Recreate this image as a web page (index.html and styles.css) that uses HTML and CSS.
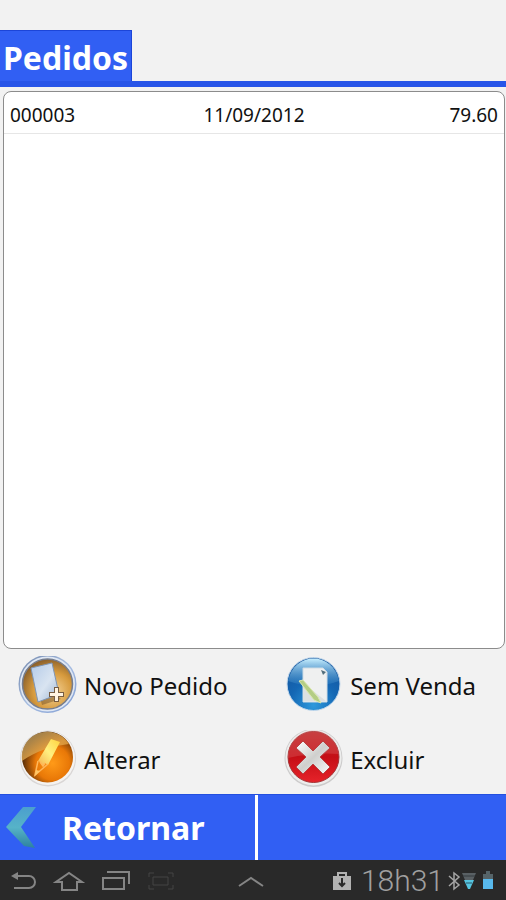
FILE: index.html
```html
<!DOCTYPE html>
<html lang="pt-BR">
<head>
<meta charset="utf-8">
<meta name="viewport" content="width=device-width, initial-scale=1">
<title>Pedidos</title>
<link rel="stylesheet" href="styles.css">
</head>
<body>
<header class="header">
  <h1 class="tab">Pedidos</h1>
</header>

<main class="main">
  <section class="list">
    <table class="orders">
      <tbody>
        <tr><td>000003</td><td class="date">11/09/2012</td><td class="total">79.60</td></tr>
      </tbody>
    </table>
  </section>

  <div class="actions">
    <button class="action" type="button">
      <svg class="action-icon" viewBox="0 0 60 60" aria-hidden="true">
        <defs>
          <radialGradient id="amber" cx=".6" cy=".65" r=".65"><stop offset="0" stop-color="#f6d59a"/><stop offset=".6" stop-color="#d69a3d"/><stop offset="1" stop-color="#8d622c"/></radialGradient>
          <linearGradient id="ring" x1="0" y1="0" x2="1" y2="1"><stop offset="0" stop-color="#6e83a8"/><stop offset=".5" stop-color="#a9bfe2"/><stop offset="1" stop-color="#7d9bd3"/></linearGradient>
          <linearGradient id="sheet" x1="0" y1="0" x2="1" y2="1"><stop offset="0" stop-color="#b3cae8"/><stop offset=".55" stop-color="#d9e4f1"/><stop offset="1" stop-color="#9db4d2"/></linearGradient>
        </defs>
        <circle cx="29.500" cy="28" r="29" fill="url(#ring)"/>
        <circle cx="29.500" cy="28" r="27.500" fill="#dfe7f3"/>
        <circle cx="29.500" cy="28" r="25" fill="url(#amber)" stroke="#777d8c" stroke-width="1.500"/>
        <path d="M16 19L24 49L43 43Z" fill="#765225" opacity=".5"/>
        <path d="M13 12L34 7L41 38L20 46Z" fill="url(#sheet)" stroke="#7e95b5"/>
        <path d="M38.500 31V46M31 38.500H46" stroke="#765c42" stroke-width="5"/>
        <path d="M38.500 32V45M32 38.500H45" stroke="#fff3e1" stroke-width="3"/>
      </svg>
      <span>Novo Pedido</span>
    </button>
    <button class="action" type="button">
      <svg class="action-icon" viewBox="0 0 60 60" aria-hidden="true">
        <defs>
          <radialGradient id="blue" cx=".5" cy=".9" r=".9"><stop offset="0" stop-color="#2e99dc"/><stop offset=".5" stop-color="#1467b4"/><stop offset="1" stop-color="#15539b"/></radialGradient>
          <linearGradient id="shine" x1="0" y1="0" x2="0" y2="1"><stop offset="0" stop-color="#c7efff"/><stop offset="1" stop-color="#4b9bd4" stop-opacity=".2"/></linearGradient>
        </defs>
        <circle cx="29.500" cy="28" r="26.500" fill="url(#blue)" stroke="#c4d9ec"/>
        <path d="M4 25C7 10 18 2.500 29.500 2.500S52 10 55 25Q30 34 4 25Z" fill="url(#shine)"/>
        <path d="M19 12H39L43 16V46H19Z" fill="#eff0f0" stroke="#cfdce5"/>
        <path d="M19 27L42 45H19Z" fill="#dde1e2"/>
        <path d="M37 14L42 16L39 19Z" fill="#536f7d"/>
        <path d="M15 25L19 24L34 41L37 47L30 44Z" fill="#b4cd84" stroke="#dbe8af"/>
      </svg>
      <span>Sem Venda</span>
    </button>
    <button class="action" type="button">
      <svg class="action-icon" viewBox="0 0 60 60" aria-hidden="true">
        <defs>
          <radialGradient id="orange" cx=".6" cy=".62" r=".6"><stop offset="0" stop-color="#ff9a18"/><stop offset=".55" stop-color="#e97807"/><stop offset="1" stop-color="#542b08"/></radialGradient>
          <linearGradient id="gold" x1="0" y1="0" x2="1" y2="1"><stop offset="0" stop-color="#99875e"/><stop offset=".6" stop-color="#e5a445"/><stop offset="1" stop-color="#c48b35"/></linearGradient>
          <linearGradient id="pencil" x1="1" y1="0" x2="0" y2="1"><stop offset="0" stop-color="#ffd23c"/><stop offset=".5" stop-color="#fff080"/><stop offset="1" stop-color="#f5b04d"/></linearGradient>
        </defs>
        <circle cx="30" cy="28.500" r="28" fill="#d9d6d5"/>
        <circle cx="30" cy="28" r="27" fill="#f5f3f1"/>
        <circle cx="29.500" cy="27" r="25.500" fill="url(#orange)"/>
        <path d="M4 31A25.500 25.500 0 0 1 51 14C34 16 18 21 4 31Z" fill="url(#gold)" opacity=".85"/>
        <path d="M33 9L42 12L30 35L27 33L25 36L22 32L20 31Z" fill="url(#pencil)"/>
        <path d="M20 31L17 45L30 34M22 32L25 36L27 33" fill="none" stroke="#ffb75a" stroke-width="1.500"/>
        <path d="M18 40L17 46L22 41Z" fill="#ffc766"/>
      </svg>
      <span>Alterar</span>
    </button>
    <button class="action" type="button">
      <svg class="action-icon" viewBox="0 0 60 60" aria-hidden="true">
        <defs>
          <linearGradient id="red" x1="0" y1="0" x2="0" y2="1"><stop offset="0" stop-color="#bd2b2c"/><stop offset=".5" stop-color="#c50f16"/><stop offset="1" stop-color="#e6232a"/></linearGradient>
          <linearGradient id="cross" x1="0" y1="0" x2="1" y2="1"><stop offset="0" stop-color="#fff"/><stop offset=".5" stop-color="#cfcfcd"/><stop offset="1" stop-color="#fafafa"/></linearGradient>
        </defs>
        <circle cx="29.500" cy="28" r="29" fill="#cccbcb"/>
        <circle cx="29.500" cy="27.500" r="28" fill="#ededec"/>
        <circle cx="29.500" cy="27" r="25.500" fill="url(#red)" stroke="#a33436"/>
        <path d="M4 28A25.500 25.500 0 0 1 55 24Q30 22 4 28Z" fill="#e27170" opacity=".3"/>
        <path d="M19 11L29 21L39 11L46 18L36 27L46 37L39 44L29 34L19 44L12 37L22 27L12 18Z" fill="url(#cross)" stroke="#b84243"/>
      </svg>
      <span>Excluir</span>
    </button>
  </div>
</main>

<footer class="footer">
  <button class="back" type="button">
    <svg class="back-icon" viewBox="0 0 30 42" aria-hidden="true">
      <defs><linearGradient id="teal" x1="0" y1="0" x2="0" y2="1"><stop offset="0" stop-color="#4b9fce"/><stop offset=".5" stop-color="#56b3c8"/><stop offset="1" stop-color="#2d819f"/></linearGradient></defs>
      <path d="M17 0H30L15 20L29 41L18 39L0 20Z" fill="url(#teal)"/>
    </svg>
    <span>Retornar</span>
  </button>
  <div class="footer-rest"></div>
</footer>

<nav class="system">
  <div class="keys">
    <button class="key" type="button" aria-label="Voltar">
      <svg width="30" height="24" viewBox="0 0 30 24"><path d="M8 7H21A6 6 0 0 1 21 19H6" fill="none" stroke="#858585" stroke-width="2"/><path d="M3 7L10 3V11Z" fill="#858585"/></svg>
    </button>
    <button class="key" type="button" aria-label="Início">
      <svg width="34" height="24" viewBox="0 0 34 24"><path d="M9 13H3L16 4L29 13H24M9 12V21H24V12" fill="none" stroke="#858585" stroke-width="2"/></svg>
    </button>
    <button class="key" type="button" aria-label="Recentes">
      <svg width="30" height="24" viewBox="0 0 30 24"><path d="M1 9H22V20H1ZM5 3H27V15" fill="none" stroke="#858585" stroke-width="2"/></svg>
    </button>
    <button class="key" type="button" aria-label="Captura de tela">
      <svg width="28" height="24" viewBox="0 0 28 24"><path d="M2 8V4H7M21 4H26V8M26 16V20H21M7 20H2V16M6 8H21V16H6Z" fill="none" stroke="#454545" stroke-width="1"/></svg>
    </button>
  </div>
  <button class="key" type="button" aria-label="Expandir">
    <svg width="28" height="24" viewBox="0 0 28 24"><path d="M2 17L14 9L26 17" fill="none" stroke="#858585" stroke-width="2"/></svg>
  </button>
  <div class="status">
    <svg width="20" height="24" viewBox="0 0 20 24" aria-hidden="true"><path d="M1 7H19V21H1Z" fill="#b2b2b2"/><path d="M6 7V4H14V7" fill="none" stroke="#b2b2b2" stroke-width="2"/><path d="M10 9V17M7 14L10 17L13 14" fill="none" stroke="#292929" stroke-width="2"/></svg>
    <time class="clock" datetime="18:31">18h31</time>
    <svg width="14" height="24" viewBox="0 0 14 24" aria-hidden="true"><path d="M2 7L12 16L7 20V4L12 8L2 17" fill="none" stroke="#a5a5a5" stroke-width="1.500"/></svg>
    <svg width="14" height="24" viewBox="0 0 14 24" aria-hidden="true"><path d="M0 4H14L11 11H3Z" fill="#596064"/><path d="M1 7H13" stroke="#343b3e"/><path d="M2 11H12L8 20H6Z" fill="#56c5e0"/><path d="M4 14H10" stroke="#28566b"/></svg>
    <svg class="battery" width="12" height="24" viewBox="0 0 12 24" aria-hidden="true"><path d="M4 2H8V5H11V11H1V5H4Z" fill="#566469"/><path d="M1 10H11V20H1Z" fill="#58b9ed"/></svg>
  </div>
</nav>
</body>
</html>
```
FILE: styles.css
```css
* { box-sizing: border-box; }

body {
  display: flex;
  flex-direction: column;
  min-height: 100vh;
  margin: 0;
  background: #f2f2f2;
  color: #111;
  font-family: "Noto Sans", "Open Sans", sans-serif;
}

button {
  padding: 0;
  border: 0;
  background: none;
  color: inherit;
  font: inherit;
  text-align: left;
  cursor: pointer;
}

svg { display: block; flex: none; }

.header {
  display: flex;
  padding-top: 30px;
  border-bottom: 6px solid #2754e8;
}

.tab {
  margin: 0;
  padding: 5px 3px 2px;
  background: #315ff3;
  border-top: 1px solid #1c45d8;
  border-right: 1px solid #1c45d8;
  color: #fff;
  font-size: 32px;
  line-height: 43px;
}

.main {
  display: flex;
  flex: 1;
  flex-direction: column;
}

.list {
  flex: 1;
  margin: 4px 1px 0 3px;
  border: 1px solid #8c8c8c;
  border-radius: 8px;
  background: #fff;
}

.orders {
  width: 100%;
  table-layout: fixed;
  border-collapse: collapse;
  font-size: 19px;
  line-height: 24px;
}

.orders td {
  padding: 11px 6px 6px;
  border-bottom: 1px solid #e6e6e6;
}

.orders .date { text-align: center; }
.orders .total { text-align: right; }

.actions {
  display: grid;
  grid-template-columns: 6fr 5fr;
  gap: 14px 0;
  padding: 7px 0 4px 18px;
}

.action {
  display: flex;
  align-items: center;
  gap: 6px;
  font-size: 24px;
  line-height: 32px;
}

.action-icon { width: 60px; height: 60px; }

.footer {
  display: flex;
  height: 66px;
  border-top: 1px solid #2450df;
  background: #315ff3;
}

.back {
  display: flex;
  flex: 1;
  align-items: center;
  gap: 26px;
  padding-left: 6px;
  border-right: 3px solid #fff;
  color: #fff;
  font-size: 32px;
  font-weight: 700;
}

.back-icon { width: 30px; height: 42px; }
.footer-rest { flex: 1; }

.system {
  display: grid;
  grid-template-columns: 1fr auto 1fr;
  align-items: center;
  height: 40px;
  padding: 2px 12px 0 8px;
  background: #292929;
}

.keys { display: flex; gap: 15px; }

.status {
  display: flex;
  align-items: center;
  justify-content: flex-end;
  gap: 1px;
}

.clock {
  margin: 0 2px 0 8px;
  color: #a0a0a0;
  font-family: Roboto, sans-serif;
  font-size: 30px;
  font-weight: 300;
  line-height: 36px;
}

.battery { margin-left: 5px; }
```
